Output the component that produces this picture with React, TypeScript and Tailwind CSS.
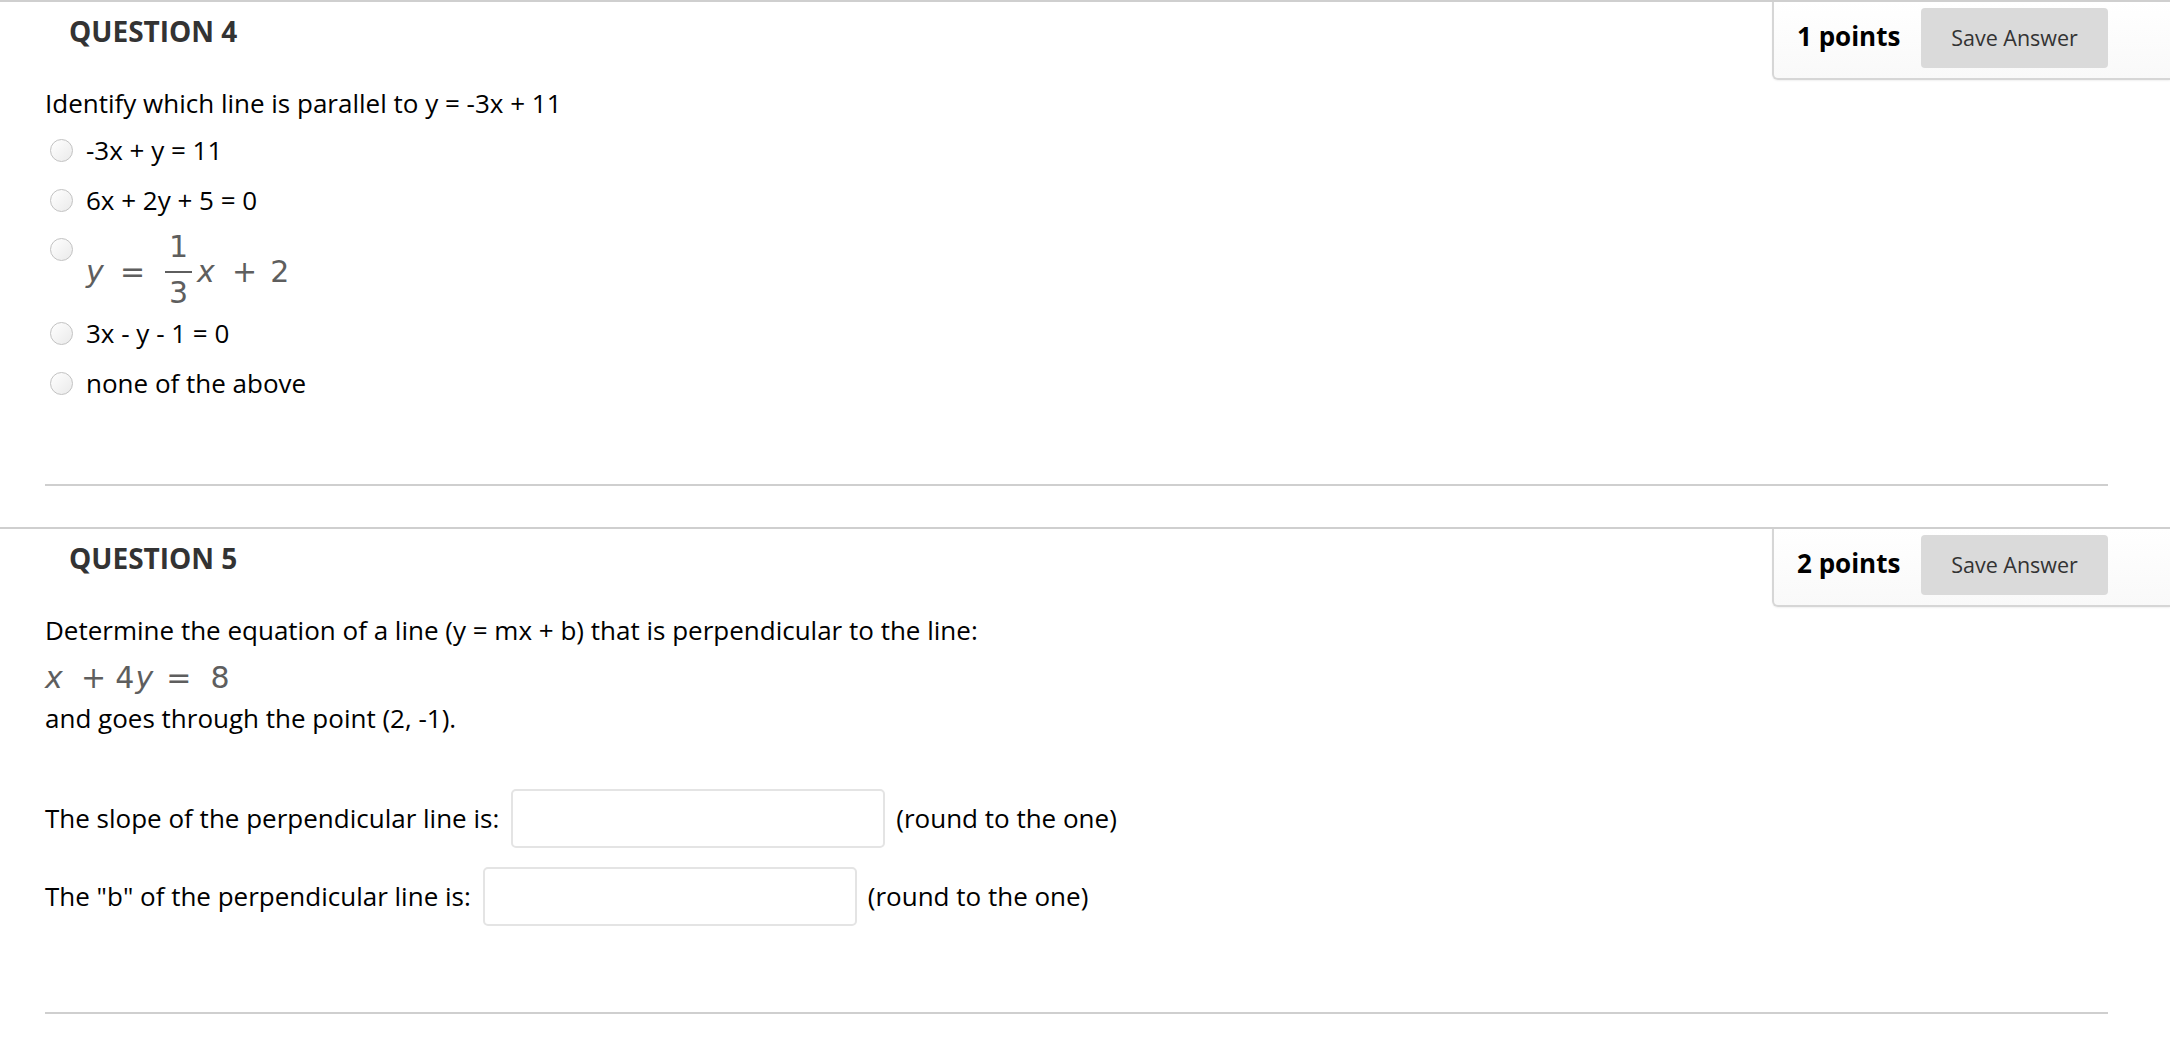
import React from 'react';

const PointsBox: React.FC<{ points: number }> = ({ points }) => (
  <div className="flex items-start w-[398px] h-[78px] pl-[23px] pt-[6px] border-l-2 border-b-2 border-[#d6d6d6] rounded-bl-[6px] bg-gradient-to-b from-white to-[#f9f9f9] shadow-[0_1px_2px_rgba(0,0,0,0.06)]">
    <span className="mt-[12px] text-[26px] leading-[32px] font-bold text-black">{points} points</span>
    <button className="ml-auto mr-[62px] w-[187px] h-[60px] rounded-[4px] bg-[#dadada] text-[21.5px] text-[#333]">
      Save Answer
    </button>
  </div>
);

const Radio: React.FC = () => (
  <span className="block shrink-0 w-[23px] h-[23px] rounded-full border border-[#c2c2c2] bg-gradient-to-br from-white to-[#eaeaea]" />
);

const Option: React.FC<{ children: React.ReactNode }> = ({ children }) => (
  <label className="flex items-center gap-[13px] pl-[5px] h-[34px]">
    <Radio />
    <span className="leading-[34px]">{children}</span>
  </label>
);

const Question: React.FC<{ num: number; points: number; children: React.ReactNode }> = ({ num, points, children }) => (
  <section className="border-t-2 border-[#cfcfcf] mb-[41px]">
    <div className="flex justify-between items-start">
      <h3 className="pl-[69px] pt-[10px] text-[28px] leading-[38px] font-bold text-[#333]">QUESTION {num}</h3>
      <PointsBox points={points} />
    </div>
    <div className="pl-[45px] pr-[62px] pt-[6px]">
      {children}
      <hr className="border-0 h-[2px] bg-[#cfcfcf]" />
    </div>
  </section>
);

// MathJax-like rendering of the equations
const mathFont = "font-['DejaVu_Sans',Verdana,sans-serif] text-[30px] leading-[32px] text-[#5e5e5e]";

export default function App() {
  return (
    <div className="min-h-screen bg-white font-['Open_Sans',sans-serif] text-[26px] text-black">
      <Question num={4} points={1}>
        <p className="leading-[34px]">Identify which line is parallel to y = -3x + 11</p>
        <div className="mt-[13px] flex flex-col gap-[16px]">
          <Option>-3x + y = 11</Option>
          <Option>6x + 2y + 5 = 0</Option>
          <label className="flex items-start h-[67px] pl-[5px]">
            <span className="mt-[5px]">
              <Radio />
            </span>
            {/* y = 1/3 x + 2 */}
            <span className={`flex items-start -mt-[2.5px] ml-[13px] ${mathFont}`}>
              <span className="mt-[25.1px] italic">y</span>
              <span className="mt-[25.1px] ml-[16.2px]">=</span>
              <span className="ml-[19.9px] flex flex-col items-center w-[27px]">
                <span>1</span>
                <span className="mt-[8.5px] w-full h-[1.5px] bg-[#5e5e5e]" />
                <span className="mt-[4px]">3</span>
              </span>
              <span className="mt-[25.1px] ml-[5px] italic">x</span>
              <span className="mt-[25.1px] ml-[17.2px]">+</span>
              <span className="mt-[25.1px] ml-[13.2px]">2</span>
            </span>
          </label>
          <Option>3x - y - 1 = 0</Option>
          <Option>none of the above</Option>
        </div>
        <div className="h-[84px]" />
      </Question>

      <Question num={5} points={2}>
        <p className="leading-[34px]">Determine the equation of a line (y = mx + b) that is perpendicular to the line:</p>
        <p className={`mt-[14.6px] flex items-start ${mathFont}`}>
          <span className="italic">x</span>
          <span className="ml-[18.2px]">+</span>
          <span className="ml-[9.2px]">4</span>
          <span className="ml-[1px] italic">y</span>
          <span className="ml-[13px]">=</span>
          <span className="ml-[19.2px]">8</span>
        </p>
        <p className="mt-[7.4px] leading-[34px]">and goes through the point (2, -1).</p>
        <div className="mt-[54px] flex items-center h-[59px]">
          <span className="leading-[34px]">The slope of the perpendicular line is:</span>
          <input type="text" className="ml-[12px] w-[374px] h-[59px] border-2 border-[#e4e4e4] rounded-[5px] bg-white outline-none" />
          <span className="ml-[11px] leading-[34px]">(round to the one)</span>
        </div>
        <div className="mt-[19px] flex items-center h-[59px]">
          <span className="leading-[34px]">The "b" of the perpendicular line is:</span>
          <input type="text" className="ml-[12px] w-[374px] h-[59px] border-2 border-[#e4e4e4] rounded-[5px] bg-white outline-none" />
          <span className="ml-[11px] leading-[34px]">(round to the one)</span>
        </div>
        <div className="h-[86px]" />
      </Question>
    </div>
  );
}
